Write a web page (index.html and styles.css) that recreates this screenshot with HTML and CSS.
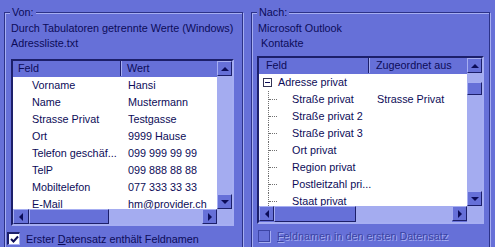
FILE: index.html
```html
<!DOCTYPE HTML>
<html>
<head>
<meta charset="utf-8">
<link rel="stylesheet" href="styles.css">
</head>
<body>
<div class="dialog">

	<fieldset class="group von">
		<legend>Von:</legend>
		<div class="info first">Durch Tabulatoren getrennte Werte (Windows)</div>
		<div class="info">Adressliste.txt</div>
		<div class="listbox">
			<div class="view">
				<div class="head"><span class="hcol one">Feld</span><span class="hcol two">Wert</span></div>
				<div class="row"><span class="c1">Vorname</span><span class="c2">Hansi</span></div>
				<div class="row"><span class="c1">Name</span><span class="c2">Mustermann</span></div>
				<div class="row"><span class="c1">Strasse Privat</span><span class="c2">Testgasse</span></div>
				<div class="row"><span class="c1">Ort</span><span class="c2">9999 Hause</span></div>
				<div class="row"><span class="c1">Telefon geschäf...</span><span class="c2">099 999 99 99</span></div>
				<div class="row"><span class="c1">TelP</span><span class="c2">099 888 88 88</span></div>
				<div class="row"><span class="c1">Mobiltelefon</span><span class="c2">077 333 33 33</span></div>
				<div class="row"><span class="c1">E-Mail</span><span class="c2">hm@provider.ch</span></div>
			</div>
			<div class="vscroll">
				<div class="sbtn"><span class="arrow up"></span></div>
				<div class="track"></div>
				<div class="sbtn"><span class="arrow down"></span></div>
			</div>
			<div class="hscroll">
				<div class="sbtn wide"><span class="arrow left"></span></div>
				<div class="thumb htl"></div>
				<div class="track"></div>
				<div class="sbtn"><span class="arrow right"></span></div>
			</div>
			<div class="corner"></div>
		</div>
		<div class="check">
			<span class="box checked"><svg width="9" height="9" viewBox="0 0 9 9"><path d="M1 4 L3.5 6.5 L8 1.5" fill="none" stroke="#0c0c58" stroke-width="2"/></svg></span>
			<span class="label">Erster <u>D</u>atensatz enthält Feldnamen</span>
		</div>
	</fieldset>

	<fieldset class="group nach">
		<legend>Nach:</legend>
		<div class="info first">Microsoft Outlook</div>
		<div class="info indent">Kontakte</div>
		<div class="listbox">
			<div class="view">
				<div class="head"><span class="hcol one">Feld</span><span class="hcol two">Zugeordnet aus</span></div>
				<div class="row parent"><span class="c1"><span class="expander"></span>Adresse privat</span><span class="c2"></span></div>
				<div class="row child"><span class="c1">Straße privat</span><span class="c2">Strasse Privat</span></div>
				<div class="row child"><span class="c1">Straße privat 2</span><span class="c2"></span></div>
				<div class="row child"><span class="c1">Straße privat 3</span><span class="c2"></span></div>
				<div class="row child"><span class="c1">Ort privat</span><span class="c2"></span></div>
				<div class="row child"><span class="c1">Region privat</span><span class="c2"></span></div>
				<div class="row child"><span class="c1">Postleitzahl pri...</span><span class="c2"></span></div>
				<div class="row child"><span class="c1">Staat privat</span><span class="c2"></span></div>
			</div>
			<div class="vscroll">
				<div class="sbtn"><span class="arrow up"></span></div>
				<div class="track short"></div>
				<div class="thumb vt"></div>
				<div class="track"></div>
				<div class="sbtn"><span class="arrow down"></span></div>
			</div>
			<div class="hscroll">
				<div class="sbtn"><span class="arrow left"></span></div>
				<div class="thumb htr"></div>
				<div class="track"></div>
				<div class="sbtn"><span class="arrow right"></span></div>
			</div>
			<div class="corner"></div>
		</div>
		<div class="check disabled">
			<span class="box"></span>
			<span class="label"><u>F</u>eldnamen in den ersten Datensatz</span>
		</div>
	</fieldset>

</div>
</body>
</html>
```

FILE: styles.css
```css
body {
	margin: 0;
	background-color: #6670d8;
	color: #0c0c58;
	font-family: "Liberation Sans", Arial, sans-serif;
	font-size: 10.8px;
	overflow: hidden;
}

.dialog {
	display: flex;
	gap: 8px;
	padding: 5px 0 0 4px;
}

fieldset.group {
	margin: 0;
	padding: 0;
	min-width: 0;
	width: 239px;
	height: 250px;
	box-sizing: border-box;
	border: 1px solid #2c3288;
	box-shadow: 1px 1px 0 #a6aef2, inset 1px 1px 0 #a6aef2;
}

legend {
	margin-left: 5px;
	padding: 0 2px;
	line-height: 14px;
	background-color: #6670d8;
}

.info {
	line-height: 15px;
	margin-left: 6px;
	white-space: nowrap;
}
.info.first {
	margin-top: 2px;
}
.nach .info.indent {
	margin-left: 9px;
}

/* list view */
.listbox {
	display: grid;
	grid-template-columns: 1fr 15px;
	grid-template-rows: 148px 15px;
	margin-top: 8px;
	margin-left: 6px;
	width: 223px;
	box-sizing: border-box;
	border-top: 2px solid #1c1f6a;
	border-left: 2px solid #1c1f6a;
	border-right: 2px solid #a6aef2;
	border-bottom: 2px solid #a6aef2;
}
.nach .listbox {
	margin-top: 5px;
	margin-left: 5px;
	width: 227px;
	grid-template-rows: 148px 16px;
}

.view {
	background-color: #ffffff;
	overflow: hidden;
}

.head {
	display: flex;
	height: 15px;
	line-height: 15px;
	background-color: #6670d8;
	border-bottom: 1px solid #6670d8;
}
.hcol {
	white-space: nowrap;
	overflow: hidden;
	box-sizing: border-box;
}
.hcol.one {
	width: 108px;
	padding-left: 5px;
	border-right: 1px solid #1c1f6a;
}
.hcol.two {
	flex: 1;
	padding-left: 6px;
	box-shadow: inset 1px 0 0 #a6aef2;
}
.nach .hcol.one {
	width: 110px;
	padding-left: 7px;
}
.nach .hcol.two {
	padding-left: 7px;
}

.row {
	display: flex;
	height: 17px;
	line-height: 17px;
	white-space: nowrap;
}
.row .c1 {
	width: 108px;
	flex: 0 0 auto;
	padding-left: 19px;
	box-sizing: border-box;
	overflow: hidden;
}
.row .c2 {
	padding-left: 7px;
}

/* tree in the right list */
.nach .row .c1 {
	width: 110px;
	position: relative;
	overflow: visible;
}
.nach .row .c2 {
	padding-left: 8px;
}
.nach .row.parent .c1 {
	padding-left: 19px;
}
.nach .row.child .c1 {
	padding-left: 33px;
}
.expander {
	position: absolute;
	left: 4px;
	top: 4px;
	width: 7px;
	height: 7px;
	border: 1px solid #333355;
	background: #ffffff;
}
.expander::after {
	content: "";
	position: absolute;
	left: 1px;
	top: 3px;
	width: 5px;
	height: 1px;
	background: #0c0c58;
}
.nach .row.child .c1::before {
	content: "";
	position: absolute;
	left: 9px;
	top: 0;
	height: 17px;
	border-left: 1px dotted #707070;
}
.nach .row.child .c1::after {
	content: "";
	position: absolute;
	left: 10px;
	top: 8px;
	width: 8px;
	border-top: 1px dotted #707070;
}

/* scrollbars */
.vscroll {
	display: flex;
	flex-direction: column;
}
.hscroll {
	display: flex;
}
.track {
	flex: 1;
	background-color: #a4acf0;
}
.track.short {
	flex: 0 0 9px;
}
.corner {
	background-color: #a4acf0;
}
.sbtn,
.thumb {
	box-sizing: border-box;
	background-color: #6670d8;
	border-top: 1px solid #a6aef2;
	border-left: 1px solid #a6aef2;
	border-right: 1px solid #1c1f6a;
	border-bottom: 1px solid #1c1f6a;
}
.sbtn {
	width: 15px;
	height: 15px;
	flex: 0 0 auto;
	display: flex;
	align-items: center;
	justify-content: center;
}
.sbtn.wide {
	width: 16px;
}
.thumb.htl {
	width: 80px;
}
.thumb.htr {
	width: 82px;
}
.thumb.vt {
	height: 13px;
}
.arrow {
	width: 0;
	height: 0;
	border: 4px solid transparent;
}
.arrow.up {
	border-bottom-color: #0c0c58;
	border-top-width: 0;
}
.arrow.down {
	border-top-color: #0c0c58;
	border-bottom-width: 0;
}
.arrow.left {
	border-right-color: #0c0c58;
	border-left-width: 0;
}
.arrow.right {
	border-left-color: #0c0c58;
	border-right-width: 0;
}

/* checkboxes */
.check {
	display: flex;
	align-items: center;
	gap: 6px;
	margin-top: 6px;
	margin-left: 2px;
	white-space: nowrap;
}
.nach .check {
	margin-left: 6px;
	gap: 7px;
}
.box {
	width: 13px;
	height: 13px;
	box-sizing: border-box;
	display: flex;
	align-items: center;
	justify-content: center;
	border-top: 2px solid #1c1f6a;
	border-left: 2px solid #1c1f6a;
	border-right: 1px solid #a6aef2;
	border-bottom: 1px solid #a6aef2;
}
.box.checked {
	background-color: #ffffff;
}
.disabled .box {
	width: 12px;
	height: 12px;
	border: 1px solid #3c44a4;
	box-shadow: 1px 1px 0 #a6aef2;
}
.disabled .label {
	color: #3c44a4;
	text-shadow: 1px 1px 0 #a6aef2;
}
```
